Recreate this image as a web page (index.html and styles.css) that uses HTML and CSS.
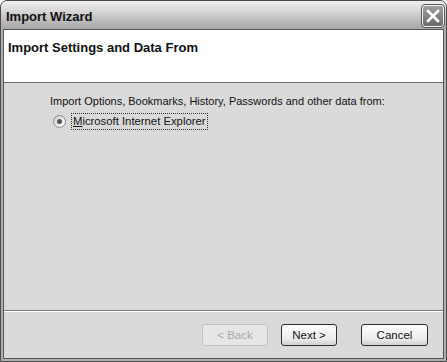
FILE: index.html
```html
<!DOCTYPE html>
<html lang="en">

<head>
	<meta charset="UTF-8">
	<title>Import Wizard</title>
	<link rel="stylesheet" href="styles.css">
</head>

<body>
	<div class="window">
		<div class="titlebar">
			<span class="title">Import Wizard</span>
			<div class="close">
				<svg width="16" height="16" viewBox="0 0 16 16">
					<path d="M3 3 L13 13 M13 3 L3 13" stroke="#fff" stroke-width="2.6" stroke-linecap="square" fill="none"/>
				</svg>
			</div>
		</div>
		<div class="client">
			<div class="header">Import Settings and Data From</div>
			<div class="content">
				<p class="intro">Import Options, Bookmarks, History, Passwords and other data from:</p>
				<div class="option">
					<span class="radio"><span class="dot"></span></span>
					<span class="label"><u>M</u>icrosoft Internet Explorer</span>
				</div>
			</div>
			<div class="footer">
				<button class="btn disabled">&lt; Back</button>
				<button class="btn next">Next &gt;</button>
				<button class="btn cancel">Cancel</button>
			</div>
		</div>
	</div>
</body>

</html>
```

FILE: styles.css
```css
/*
  Wizard dialog, greyscale XP look.
*/
body {
	margin: 0;
	background: #fff;
	font-family: "Liberation Sans", Arial, sans-serif;
}

.window {
	width: 447px;
	height: 362px;
	box-sizing: border-box;
	border: 1px solid #4a4a4a;
	border-radius: 7px 7px 0 0;
	background: #b0b0b0;
	padding: 0 2px 2px;
	display: flex;
	flex-direction: column;
}

.titlebar {
	height: 28px;
	display: flex;
	align-items: center;
	justify-content: space-between;
	padding: 0 2px 0 5px;
	background: linear-gradient(#f0f0f0, #d4d4d4 40%, #b4b4b4 80%, #a8a8a8);
	margin: 0 -2px;
	border-radius: 6px 6px 0 0;
}

.title {
	font-weight: bold;
	font-size: 13px;
	color: #111;
	padding-top: 2px;
}

.close {
	width: 22px;
	height: 22px;
	box-sizing: border-box;
	border: 1px solid #f4f4f4;
	outline: 1px solid #555;
	border-radius: 3px;
	background: linear-gradient(#a0a0a0, #6a6a6a);
	display: flex;
	align-items: center;
	justify-content: center;
	margin-top: 2px;
}

.client {
	flex: 1;
	border: 1px solid #555;
	background: #dadada;
	display: flex;
	flex-direction: column;
}

.header {
	height: 53px;
	background: #fff;
	border-bottom: 1px solid #6e6e6e;
	font-weight: bold;
	font-size: 13px;
	color: #111;
	padding: 10px 0 0 4px;
	box-sizing: border-box;
}

.content {
	flex: 1;
	padding: 12px 0 0 46px;
	font-size: 11px;
	color: #111;
	border-bottom: 1px solid #7a7a7a;
}

.intro {
	margin: 0 0 6px;
}

.option {
	display: flex;
	align-items: center;
	margin-left: 3px;
}

.radio {
	width: 11px;
	height: 11px;
	border: 1px solid #8a8a8a;
	border-radius: 50%;
	background: linear-gradient(135deg, #cfcfcf, #fff);
	display: flex;
	align-items: center;
	justify-content: center;
	margin-right: 5px;
}

.dot {
	width: 5px;
	height: 5px;
	border-radius: 50%;
	background: #555;
}

.label {
	font-size: 11.3px;
	border: 1px dotted #333;
	padding: 1px 1px 2px;
}

.footer {
	height: 47px;
	border-top: 1px solid #fff;
	display: flex;
	justify-content: flex-end;
	align-items: flex-start;
	padding: 12px 15px 0 0;
	box-sizing: border-box;
}

.btn {
	height: 22px;
	box-sizing: border-box;
	border: 1px solid #2e2e2e;
	border-radius: 3px;
	background: linear-gradient(#fdfdfd, #ececec 70%, #d0d0d0);
	font-family: "Liberation Sans", Arial, sans-serif;
	font-size: 11.5px;
	color: #111;
	padding: 0;
}

.btn.disabled {
	width: 66px;
	margin-right: 13px;
	border-color: #c4c4c4;
	background: #e6e6e6;
	color: #a8a8a8;
}

.btn.next {
	width: 56px;
	margin-right: 24px;
}

.btn.cancel {
	width: 67px;
}
```
